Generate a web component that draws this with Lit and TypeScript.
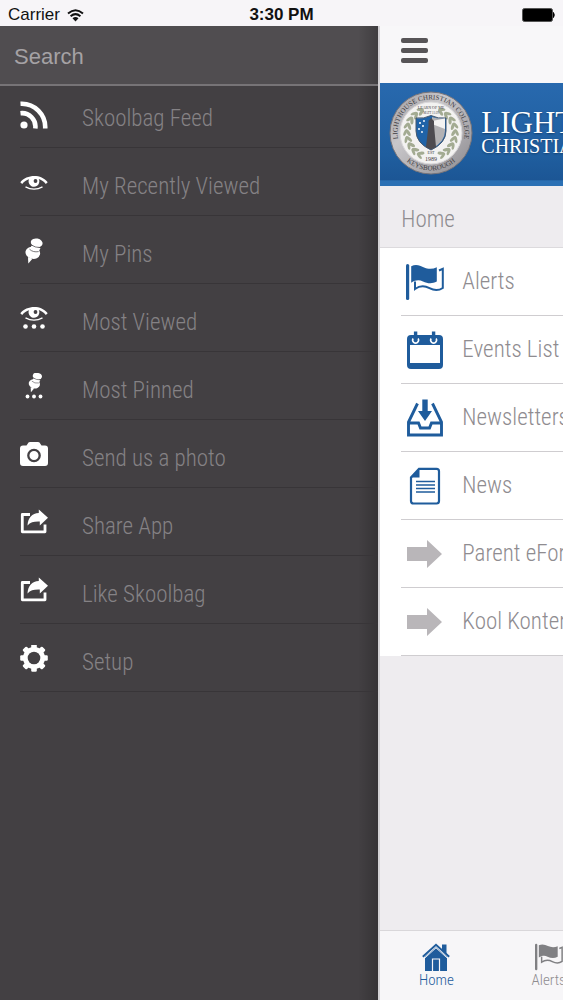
import { LitElement, html, css, svg } from "lit";
import { customElement, property } from "lit/decorators.js";

const eye = svg`
  <path d="M0.300 8.200C6.500 0.400 21 -0.600 27.700 8.200L25.800 9.900C23.500 7.200 21 5.700 18.800 5A5.400 5.400 0 1 1 9 5.200C6.500 6 4.200 7.600 2.200 9.900Z" fill="currentColor"/>
  <circle cx="15.500" cy="7" r="1.900" fill="#434043"/>
  <path d="M5.500 12.800Q14 17.500 22.500 12.800" fill="none" stroke="currentColor" stroke-width="1.400"/>`;

const pin = svg`
  <g fill="currentColor">
    <ellipse cx="16.700" cy="4.800" rx="6" ry="4.300" transform="rotate(12 16.700 4.800)"/>
    <path d="M11.500 7.500L20.500 10L18.500 14L9.500 12Z"/>
    <ellipse cx="12.800" cy="14.800" rx="7.400" ry="6" transform="rotate(14 12.800 14.800)"/>
    <path d="M8 19L12.500 20.800L8.300 25.500Z"/>
  </g>
  <path d="M11 6.800Q15 9.800 21 9.600M9.500 11.200Q13 14.600 18.700 13.600" fill="none" stroke="#434043" stroke-width="0.700"/>`;

const flag = svg`
  <g fill="currentColor">
    <rect x="0" y="1" width="3.200" height="36" rx="1.600"/>
    <path d="M5.200 3.200C10 0.800 14 2.500 17.500 4.200C22 6.200 26.500 6.400 30.800 4.300V18.600C26 21.200 21.500 20.600 17 18.500C13 16.700 9.500 17 5.200 19.800Z"/>
  </g>
  <path d="M9 18.500V26C14 22.500 19 22.800 23.500 25.200C28 27.500 33 27.500 36.800 25V5.800L33 7.500" fill="none" stroke="currentColor" stroke-width="2"/>`;

const share = svg`
  <path d="M10 5.500H2.300V22.800H25V15.500" fill="none" stroke="currentColor" stroke-width="2.800" stroke-linejoin="round"/>
  <path d="M18.800 0.500L28 8.800L19.800 16.500V12.600C14 12.400 10.500 13.200 7.500 16.500C8 8.500 12 4.200 18.800 3.900Z" fill="currentColor"/>`;

const icons: Record<string, { box: string; art: unknown }> = {
  feed: {
    box: "0 0 28 28",
    art: svg`<circle cx="4" cy="24" r="3.600" fill="currentColor"/>
      <path d="M0.500 12.200A13.500 13.500 0 0 1 15.300 27.500M0.500 2.800A23.500 23.500 0 0 1 25.200 27.500" fill="none" stroke="currentColor" stroke-width="4.600"/>`,
  },
  eye: { box: "0 -5 28 28", art: eye },
  pin: { box: "0 -1 28 28", art: pin },
  eyeDots: {
    box: "0 0 28 28",
    art: svg`${eye}<g fill="currentColor"><circle cx="5.500" cy="21.500" r="2.300"/><circle cx="14" cy="21.500" r="2.300"/><circle cx="22.500" cy="21.500" r="2.300"/></g>`,
  },
  pinDots: {
    box: "0 1 28 28",
    art: svg`<g transform="translate(4.500 0.500) scale(0.770)">${pin}</g><g fill="currentColor"><circle cx="7.500" cy="24.500" r="1.900"/><circle cx="14" cy="24.500" r="1.900"/><circle cx="20.500" cy="24.500" r="1.900"/></g>`,
  },
  camera: {
    box: "0 1 28 28",
    art: svg`<path d="M3 5.500H6.500L8.500 2.500Q9 2 10 2H18Q19 2 19.500 2.500L21.500 5.500H25Q28 5.500 28 8.500V23Q28 26 25 26H3Q0 26 0 23V8.500Q0 5.500 3 5.500Z" fill="currentColor"/>
      <circle cx="14" cy="15.500" r="5.700" fill="none" stroke="#434043" stroke-width="2.300"/>`,
  },
  share: { box: "0 0 28 28", art: share },
  gear: {
    box: "0 1 28 28",
    art: svg`<g fill="currentColor">${[0, 45, 90, 135].map(
      (a) => svg`<rect x="11.200" y="0.200" width="5.600" height="27.600" rx="1.200" transform="rotate(${a} 14 14)"/>`
    )}<circle cx="14" cy="14" r="11"/></g><circle cx="14" cy="14" r="6.300" fill="#434043"/>`,
  },
  flag: { box: "0 0 38 38", art: flag },
  calendar: {
    box: "0 0 38 38",
    art: svg`<rect x="2.500" y="5.500" width="33" height="31" rx="2.500" fill="none" stroke="currentColor" stroke-width="3"/>
      <path d="M2 6H36V14H2Z" fill="currentColor"/><path d="M2 34H36" stroke="currentColor" stroke-width="4"/>
      <path d="M7.200 7.500A2.900 2.900 0 1 0 12 7.500M25.200 7.500A2.900 2.900 0 1 0 30 7.500" fill="none" stroke="#fff" stroke-width="1.600"/>
      <path d="M9.600 0.500V9M27.600 0.500V9" stroke="currentColor" stroke-width="3.400"/>`,
  },
  inbox: {
    box: "0 0 38 38",
    art: svg`<path d="M11.500 4.500L2.500 23V36H35.500V23L26.500 4.500M2.500 24H12.500L14.500 29H23.500L25.500 24H35.500" fill="none" stroke="currentColor" stroke-width="2.900"/>
      <path d="M16.300 0.500H21.700V12H26L19 22L12 12H16.300Z" fill="currentColor"/>`,
  },
  page: {
    box: "0 0 38 38",
    art: svg`<path d="M13 1.800H30.500Q33 1.800 33 4.300V34Q33 36.500 30.500 36.500H7.500Q5 36.500 5 34V10.500Z" fill="none" stroke="currentColor" stroke-width="2.200"/>
      <path d="M13.500 1.500V10.500H4.500Z" fill="currentColor"/>
      <path d="M10 14.500H29M10 18H29M10 21.500H29M10 25H29" stroke="currentColor" stroke-width="1.300"/>`,
  },
  arrow: { box: "0 1 38 38", art: svg`<path d="M1 13H21V6L36 20L21 34V27H1Z" fill="currentColor"/>` },
  home: {
    box: "0 0 28 28",
    art: svg`<path d="M14 4.200L25 14V28H3V14Z" fill="currentColor"/>
      <path d="M0.800 13.800L14 1.800L27.200 13.800" fill="none" stroke="currentColor" stroke-width="2"/>
      <path d="M20 1.500H24.500V11L20 7Z" fill="currentColor"/>
      <path d="M2.500 15.300L14 4.900L25.500 15.300" fill="none" stroke="#f7f6f8" stroke-width="0.900"/>
      <path d="M10.500 28V16H17.500V28" fill="none" stroke="#f7f6f8" stroke-width="1.200"/>`,
  },
};

@customElement("glyph-icon")
class GlyphIcon extends LitElement {
  @property() name = "";
  static styles = css`
    :host { display: block; flex: none; }
    svg { display: block; width: 100%; height: 100%; }
  `;
  render() {
    const icon = icons[this.name];
    return html`<svg viewBox=${icon.box} aria-hidden="true">${icon.art}</svg>`;
  }
}

@customElement("school-banner")
class SchoolBanner extends LitElement {
  static styles = css`
    :host {
      display: flex;
      align-items: center;
      gap: 8px;
      height: 103px;
      box-sizing: border-box;
      padding: 0 9px 4px;
      background: linear-gradient(#2869ae, #1f5e9f 70%, #1c5695 94%, #2b70b4 95%);
      overflow: hidden;
    }
    .seal { flex: none; width: 84px; height: 84px; }
    .title {
      color: #fff;
      font-family: "Liberation Serif", serif;
      white-space: nowrap;
      text-shadow: 0 1px 2px #123d6c;
    }
    .line { display: block; font-size: 31px; line-height: 26px; }
    .small { font-size: 20px; line-height: 20px; }
    text { font-family: "Liberation Serif", serif; fill: #3f3d42; }
  `;
  render() {
    const leaves = [0, 1, 2, 3, 4, 5, 6, 7, 8].map((i) => {
      const r = 115 + i * 16;
      const a = (r * Math.PI) / 180;
      const x = 42 + 24 * Math.cos(a);
      const y = 42 + 24 * Math.sin(a);
      return svg`<ellipse cx=${x - 1.5} cy=${y} rx="1.600" ry="3.800" transform="rotate(${r - 30} ${x} ${y})"/>
        <ellipse cx=${x + 2} cy=${y} rx="1.400" ry="3.500" transform="rotate(${r + 25} ${x} ${y})"/>`;
    });
    return html`
      <svg class="seal" viewBox="0 0 84 84" role="img" aria-label="Lighthouse Christian College seal">
        <defs>
          <linearGradient id="metal" x1="0" y1="0" x2="1" y2="1">
            <stop offset="0" stop-color="#9b999d"/><stop offset="0.350" stop-color="#c9c7ca"/>
            <stop offset="0.700" stop-color="#aaa8ac"/><stop offset="1" stop-color="#8b898e"/>
          </linearGradient>
          <path id="upper" d="M9.500 50A33.500 33.500 0 1 1 74.500 50"/>
          <path id="lower" d="M15 68A37.800 37.800 0 0 0 69 68"/>
        </defs>
        <circle cx="42" cy="42" r="41" fill="url(#metal)" stroke="#77747a"/>
        <circle cx="42" cy="42" r="31" fill="#f3f2f1" stroke="#d9d7d9"/>
        <text font-size="7"><textPath href="#upper" startOffset="50%" text-anchor="middle">LIGHTHOUSE CHRISTIAN COLLEGE</textPath></text>
        <text font-size="7"><textPath href="#lower" startOffset="50%" text-anchor="middle">KEYSBOROUGH</textPath></text>
        <g fill="#a3ab92">${leaves}<g transform="translate(84 0) scale(-1 1)">${leaves}</g></g>
        <path d="M27 27Q35 28 42 24.500Q49 28 57 27V40Q57 52 42 59Q27 52 27 40Z" fill="#1f63a8" stroke="#46586f"/>
        <path d="M43 26Q49 28 56 27.500V40Q56 51 43 57.500Z" fill="#b3b2b4"/>
        <path d="M43 30L56 27.500V38L43 33Z" fill="#f4f3f2"/>
        <path d="M39.500 34V30L42 27L45 30V34L47 56L42 58.500L37 56Z" fill="#4d4b50"/>
        <g fill="#fff"><circle cx="31" cy="32" r="1"/><circle cx="34" cy="35" r="1"/><circle cx="30" cy="38" r="1"/><circle cx="35" cy="30" r="0.900"/><circle cx="33" cy="41" r="0.900"/></g>
        <text x="42" y="18" font-size="4" text-anchor="middle">LEARN OF ME</text>
        <text x="42" y="23" font-size="3" text-anchor="middle">MATT 11:29</text>
        <text x="42" y="63" font-size="4" text-anchor="middle">EST</text>
        <text x="42" y="70" font-size="6" text-anchor="middle">1989</text>
      </svg>
      <div class="title"><span class="line">LIGHTHOUSE</span><span class="line small">CHRISTIAN COLLEGE</span></div>
    `;
  }
}

@customElement("app-root")
class AppRoot extends LitElement {
  private menu = [
    ["feed", "Skoolbag Feed"],
    ["eye", "My Recently Viewed"],
    ["pin", "My Pins"],
    ["eyeDots", "Most Viewed"],
    ["pinDots", "Most Pinned"],
    ["camera", "Send us a photo"],
    ["share", "Share App"],
    ["share", "Like Skoolbag"],
    ["gear", "Setup"],
  ];
  private pages = [
    ["flag", "Alerts"],
    ["calendar", "Events List"],
    ["inbox", "Newsletters"],
    ["page", "News"],
    ["arrow", "Parent eForms"],
    ["arrow", "Kool Kontent"],
  ];

  static styles = css`
    :host {
      display: flex;
      flex-direction: column;
      min-height: 100vh;
      overflow: hidden;
      background: #434043;
      font-family: "Roboto Condensed", Roboto, sans-serif;
      font-weight: 300;
      font-size: 23px;
      line-height: 28px;
    }
    button, input { font: inherit; border: 0; margin: 0; padding: 0; background: none; }
    ul { list-style: none; margin: 0; padding: 0; }
    a { text-decoration: none; color: inherit; }

    .status {
      display: grid;
      grid-template-columns: 1fr auto 1fr;
      align-items: center;
      height: 26px;
      box-sizing: border-box;
      padding: 4px 8px 0;
      background: #f7f5f8;
      color: #111;
      font: 400 17px/20px "Liberation Sans", sans-serif;
    }
    .carrier { display: flex; align-items: center; gap: 7px; }
    .wifi { width: 17px; height: 13px; }
    .time { font-weight: 700; }
    .battery { justify-self: end; width: 33px; height: 14px; }

    .shell { flex: 1; display: flex; }
    .drawer {
      flex: 0 0 67.2%;
      box-sizing: border-box;
      color: #858285;
      background: linear-gradient(to left, #0003, #0000 20px);
    }
    .search {
      display: block;
      width: 100%;
      height: 60px;
      box-sizing: border-box;
      padding: 4px 14px 0;
      border-bottom: 2px solid #777477;
      background: linear-gradient(to left, #0003, #0000 20px) #504d50;
      color: #a9a6a9;
      font: 400 22px/28px "Liberation Sans", sans-serif;
      border-radius: 0;
    }
    .search::placeholder { color: #a5a2a5; opacity: 1; }
    .menu { padding-left: 20px; }
    .item {
      display: flex;
      align-items: flex-end;
      gap: 34px;
      width: 100%;
      height: 68px;
      box-sizing: border-box;
      padding-bottom: 14px;
      border-bottom: 1px solid #383538;
      color: inherit;
      text-align: left;
    }
    li:first-child .item { height: 62px; }
    .item glyph-icon { width: 28px; height: 28px; color: #fff; margin-bottom: 4px; }

    .panel {
      flex: 0 0 100%;
      box-sizing: border-box;
      display: flex;
      flex-direction: column;
      border-left: 2px solid #d4d2d5;
      background: #eeecef;
      color: #8f8c90;
    }
    .bar { display: flex; align-items: center; height: 57px; padding: 0 21px 8px; box-sizing: border-box; background: #f8f7f9; }
    .burger { display: grid; gap: 5px; width: 27px; }
    .stroke { height: 5px; border-radius: 2px; background: #575457; }
    .heading {
      margin: 0;
      padding: 20px 21px 13px;
      border-bottom: 1px solid #dcdadd;
      font: inherit;
      line-height: 28px;
    }
    .pages { background: #fff; padding-left: 21px; }
    .page {
      display: flex;
      align-items: center;
      gap: 18px;
      height: 68px;
      box-sizing: border-box;
      border-bottom: 1px solid #cfcdd0;
      padding-left: 5px;
      white-space: nowrap;
    }
    .page glyph-icon { width: 38px; height: 38px; color: #1f5c9c; }
    .page.plain glyph-icon { color: #b9b6b9; }
    .tabs { display: flex; height: 69px; margin-top: auto; border-top: 1px solid #d9d7da; background: #f7f6f8; }
    .tab {
      flex: 0 0 20%;
      display: flex;
      flex-direction: column;
      align-items: center;
      padding-top: 12px;
      font-size: 15px;
      line-height: 18px;
      box-sizing: border-box;
    }
    .tab glyph-icon { width: 28px; height: 28px; color: #808083; }
    .tab.current, .tab.current glyph-icon { color: #1f5c9c; }
  `;

  render() {
    return html`
      <header class="status">
        <span class="carrier">Carrier
          <svg class="wifi" viewBox="0 0 17 13" role="img" aria-label="Wi-Fi">
            <path d="M1 4.500Q8.500 -2 16 4.500M3.600 7.300Q8.500 3 13.400 7.300" fill="none" stroke="#111" stroke-width="2"/>
            <path d="M5.500 9.300Q8.500 6.800 11.500 9.300L8.500 12.500Z" fill="#111"/>
          </svg>
        </span>
        <span class="time">3:30 PM</span>
        <svg class="battery" viewBox="0 0 33 14" role="img" aria-label="Battery full">
          <rect x="0.500" y="0.500" width="30" height="13" rx="2" fill="#000" stroke="#555"/>
          <path d="M31.500 4.500Q33 7 31.500 9.500Z" fill="#000" stroke="#000"/>
        </svg>
      </header>
      <div class="shell">
        <nav class="drawer" aria-label="Menu">
          <input class="search" type="search" placeholder="Search" aria-label="Search" />
          <ul class="menu">
            ${this.menu.map(
              ([icon, label]) => html`<li><button class="item"><glyph-icon name=${icon}></glyph-icon>${label}</button></li>`
            )}
          </ul>
        </nav>
        <main class="panel">
          <div class="bar">
            <button class="burger" aria-label="Toggle menu">
              <span class="stroke"></span><span class="stroke"></span><span class="stroke"></span>
            </button>
          </div>
          <school-banner></school-banner>
          <h1 class="heading">Home</h1>
          <ul class="pages">
            ${this.pages.map(
              ([icon, label]) => html`<li>
                <a class="page ${icon === "arrow" ? "plain" : ""}" href="#"><glyph-icon name=${icon}></glyph-icon>${label}</a>
              </li>`
            )}
          </ul>
          <nav class="tabs" aria-label="Sections">
            <a class="tab current" href="#"><glyph-icon name="home"></glyph-icon>Home</a>
            <a class="tab" href="#"><glyph-icon name="flag"></glyph-icon>Alerts</a>
          </nav>
        </main>
      </div>
    `;
  }
}
